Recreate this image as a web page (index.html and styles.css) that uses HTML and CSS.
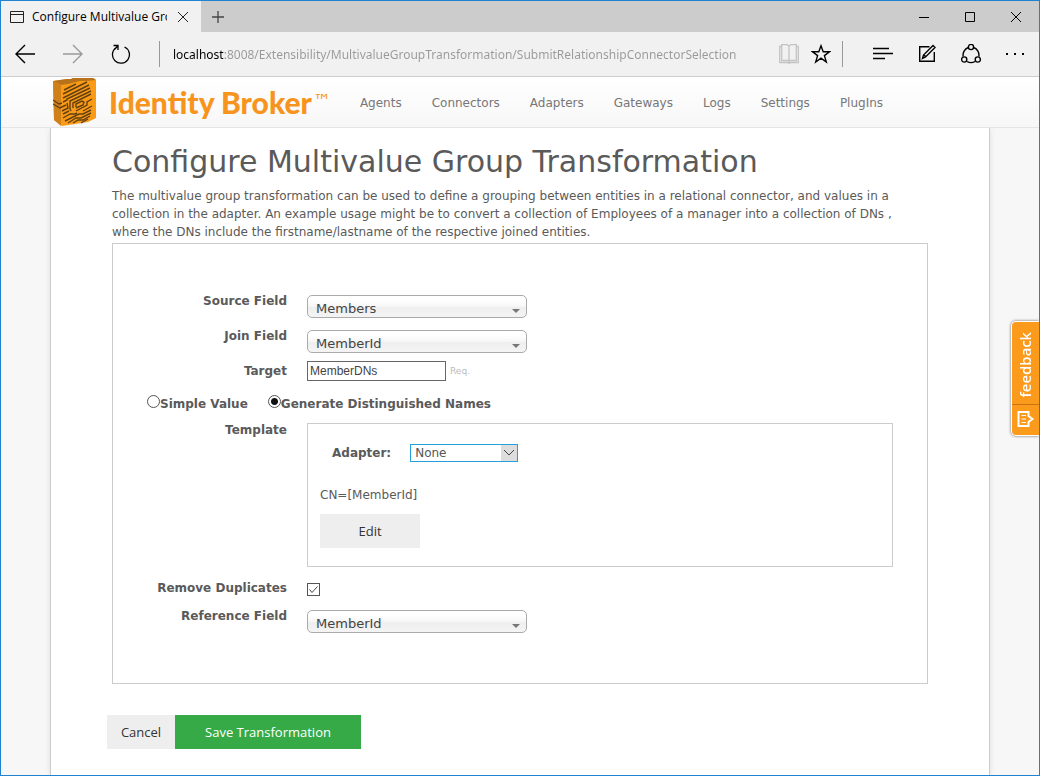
FILE: index.html
```html
<!DOCTYPE html>
<html lang="en">
<head>
  <meta charset="utf-8">
  <title>Configure Multivalue Group Transformation</title>
  <link rel="stylesheet" href="styles.css">
</head>
<body>
<div class="window">

  <!-- Browser tabs -->
  <div class="tabbar">
    <div class="tab">
      <svg class="tab-icon" width="14" height="12" viewBox="0 0 14 12"><path d="M.5.5h13v11H.5zM.5 3.500h13" fill="none" stroke="#222"/></svg>
      <span class="tab-title">Configure Multivalue Group</span>
      <button class="icon-btn" aria-label="Close tab">
        <svg width="12" height="12" viewBox="0 0 12 12"><path d="M1 1l10 10M11 1L1 11" stroke="#222" fill="none"/></svg>
      </button>
    </div>
    <button class="icon-btn new-tab" aria-label="New tab">
      <svg width="12" height="12" viewBox="0 0 12 12"><path d="M6 0v12M0 6h12" stroke="#444" stroke-width="1.300" fill="none"/></svg>
    </button>
    <div class="window-buttons">
      <button class="icon-btn" aria-label="Minimize"><svg width="12" height="12" viewBox="0 0 12 12"><path d="M1 6.500h10" stroke="#000"/></svg></button>
      <button class="icon-btn" aria-label="Maximize"><svg width="12" height="12" viewBox="0 0 12 12"><path d="M1.500 1.500h9v9h-9z" fill="none" stroke="#000"/></svg></button>
      <button class="icon-btn" aria-label="Close"><svg width="12" height="12" viewBox="0 0 12 12"><path d="M1 1l10 10M11 1L1 11" stroke="#000" fill="none"/></svg></button>
    </div>
  </div>

  <!-- Address bar -->
  <div class="toolbar">
    <div class="nav-buttons">
      <button class="icon-btn" aria-label="Back"><svg width="20" height="20" viewBox="0 0 20 20"><path d="M20 10H1M10 1L1 10l9 9" fill="none" stroke="#000" stroke-width="1.400"/></svg></button>
      <button class="icon-btn" aria-label="Forward"><svg width="20" height="20" viewBox="0 0 20 20"><path d="M0 10h19M10 1l9 9-9 9" fill="none" stroke="#999" stroke-width="1.400"/></svg></button>
      <button class="icon-btn" aria-label="Refresh"><svg width="20" height="20" viewBox="0 0 20 20"><path d="M13.500 3a8.500 8.500 0 1 1-8.500 .800M2.500 1.500H7V6M7 1.500L4 5" fill="none" stroke="#000" stroke-width="1.300"/></svg></button>
    </div>
    <div class="divider"></div>
    <input class="address" aria-label="Address" value="localhost:8008/Extensibility/MultivalueGroupTransformation/SubmitRelationshipConnectorSelection">
    <div class="page-buttons">
      <button class="icon-btn" aria-label="Reading view"><svg width="20" height="20" viewBox="0 0 20 20"><path d="M.700 2.500h2V.700H8l2 1.300L12 .700h5.300v1.800h2v16H11l-1 1-1-1H.700zM2.700 2.500v14H9l1 .800 1-.800h6.300v-14M10 2v15" fill="none" stroke="#c4c4c4" stroke-width="1.300"/></svg></button>
      <button class="icon-btn" aria-label="Favorite"><svg width="20" height="20" viewBox="0 0 20 20"><path d="M10 1.800l2.200 6h6.200l-5 3.800 1.900 6.400-5.300-3.800L4.700 18l1.900-6.400-5-3.800h6.200z" fill="none" stroke="#000" stroke-width="1.400"/></svg></button>
    </div>
    <div class="divider"></div>
    <div class="hub-buttons">
      <button class="icon-btn" aria-label="Hub"><svg width="20" height="20" viewBox="0 0 20 20"><path d="M0 4.500h16M0 9.500h20M0 14.500h12" stroke="#000" stroke-width="1.300"/></svg></button>
      <button class="icon-btn" aria-label="Web note"><svg width="20" height="20" viewBox="0 0 20 20"><path d="M12.500 2.700H2.700v14.600h14.600V8M5.500 14.500l1-3.500L16 1.500l2 2L8.500 13zM7 11l2 2" fill="none" stroke="#000" stroke-width="1.400"/></svg></button>
      <button class="icon-btn" aria-label="Share"><svg width="20" height="20" viewBox="0 0 20 20"><g fill="none" stroke="#000" stroke-width="1.400"><path d="M7.300 3.500A8 8 0 0 0 2.200 12.500M12.700 3.500a8 8 0 0 1 5.100 9M6 17.500a8 8 0 0 0 8 0"/><circle cx="10" cy="3" r="2.600"/><circle cx="3.200" cy="15.500" r="2.600"/><circle cx="16.800" cy="15.500" r="2.600"/></g></svg></button>
      <button class="icon-btn" aria-label="More"><svg width="20" height="20" viewBox="0 0 20 20"><path d="M1 9h2v2H1zM9 9h2v2H9zM17 9h2v2h-2z"/></svg></button>
    </div>
  </div>

  <!-- Site header -->
  <header class="site-header">
    <div class="header-inner">
      <a class="brand" href="#">
        <svg width="44" height="48" viewBox="0 0 44 48">
          <path d="M0 3L14 1h4l2-1h20l3 2v38l-8 4-26 4-8-6z" fill="#fb9a17"/>
          <path d="M0 3L14 1h4l2-1h20l3 2-10 1-6 0-12 3-7 1z" fill="#b8721b"/>
          <path d="M0 3l8 4v41l-7-6z" fill="#d08018"/>
          <g fill="none" stroke="#62400f" stroke-width="1.400">
            <path d="M11 12l12-6M10 16l24-12M10 20l26-13M10 24l4-2v-1l23-11"/>
            <path d="M0 22l6 4 3-1M0 26l7 4 6-3M9 33l6-3-1-5M10 36l6-3"/>
            <path d="M18 33l-1-2v-8l21-10M20 30v-5l18-9M23 29v-3l6-3 2 1-1 3-7 3M23 33l11-6v-3l5-3M30 33l9-5"/>
            <path d="M10 40l7-4h5l2-1M12 43l14-7h4l8-4M15 45l8-5h5l10-5M20 45l5-3h5l7-4M28 45l7-4"/>
          </g>
        </svg>
        <span class="brand-name">Identity Broker</span><span class="brand-tm">™</span>
      </a>
      <nav class="site-nav">
        <a href="#">Agents</a>
        <a href="#">Connectors</a>
        <a href="#">Adapters</a>
        <a href="#">Gateways</a>
        <a href="#">Logs</a>
        <a href="#">Settings</a>
        <a href="#">PlugIns</a>
      </nav>
    </div>
  </header>

  <main class="page">
    <h1>Configure Multivalue Group Transformation</h1>
    <p class="intro">The multivalue group transformation can be used to define a grouping between entities in a relational connector, and values in a collection in the adapter. An example usage might be to convert a collection of Employees of a manager into a collection of DNs , where the DNs include the firstname/lastname of the respective joined entities.</p>

    <form>
      <div class="panel">
        <div class="row">
          <label class="row-label" for="source">Source Field</label>
          <div class="picker">
            <select id="source"><option>Members</option></select>
            <svg class="arrow" width="8" height="4" viewBox="0 0 8 4"><path d="M0 0h8L4 4z" fill="#777"/></svg>
          </div>
        </div>
        <div class="row">
          <label class="row-label" for="join">Join Field</label>
          <div class="picker">
            <select id="join"><option>MemberId</option></select>
            <svg class="arrow" width="8" height="4" viewBox="0 0 8 4"><path d="M0 0h8L4 4z" fill="#777"/></svg>
          </div>
        </div>
        <div class="row row-target">
          <label class="row-label" for="target">Target</label>
          <input class="text" type="text" id="target" value="MemberDNs">
          <span class="req">Req.</span>
        </div>
        <div class="row row-radios">
          <label class="radio"><input type="radio" name="mode">Simple Value</label>
          <label class="radio"><input type="radio" name="mode" checked>Generate Distinguished Names</label>
        </div>
        <div class="row row-template">
          <span class="row-label">Template</span>
          <div class="template">
            <div class="adapter">
              <label for="adapter">Adapter:</label>
              <div class="dropdown">
                <select id="adapter"><option>None</option></select>
                <svg class="chevron" width="16" height="16" viewBox="0 0 16 16"><path d="M0 0h16v16H0z" fill="#ddd"/><path d="M3 5l5 5 5-5" fill="none" stroke="#444"/></svg>
              </div>
            </div>
            <div class="expression">CN=[MemberId]</div>
            <button class="btn btn-edit" type="button">Edit</button>
          </div>
        </div>
        <div class="row row-check">
          <label class="row-label" for="dupes">Remove Duplicates</label>
          <span class="check">
            <input type="checkbox" id="dupes" checked>
            <svg class="tick" width="13" height="13" viewBox="0 0 13 13"><path d="M2.500 6.500L5 9.500l5.500-6" fill="none" stroke="#444"/></svg>
          </span>
        </div>
        <div class="row">
          <label class="row-label" for="reference">Reference Field</label>
          <div class="picker">
            <select id="reference"><option>MemberId</option></select>
            <svg class="arrow" width="8" height="4" viewBox="0 0 8 4"><path d="M0 0h8L4 4z" fill="#777"/></svg>
          </div>
        </div>
      </div>
      <div class="actions">
        <button class="btn btn-cancel" type="button">Cancel</button>
        <button class="btn btn-save" type="submit">Save Transformation</button>
      </div>
    </form>
  </main>

  <a class="feedback" href="#">
    <svg width="18" height="18" viewBox="0 0 18 18"><path d="M2 2h10v4l4 3-4 3v4H2z" fill="none" stroke="#fff" stroke-width="2"/><path d="M5 5.500h4.500M5 9h4.500M5 12.500h4.500" stroke="#fff" stroke-width="1.200"/></svg>
    <span>feedback</span>
  </a>
</div>
</body>
</html>
```
FILE: styles.css
```css
* {
  box-sizing: border-box;
}
body {
  margin: 0;
  font-family: Verdana, "DejaVu Sans", sans-serif;
  font-size: 12px;
  color: #5a5a5a;
}
a {
  text-decoration: none;
}
svg {
  display: block;
}
button {
  border: 0;
  padding: 0;
  cursor: pointer;
}
.window {
  display: flex;
  flex-direction: column;
  min-height: 100vh;
  border: 1px solid #1f83d1;
  background: #f7f7f7;
}

/* Browser tabs */
.tabbar {
  display: flex;
  height: 31px;
  background: #ccc;
}
.tab {
  display: flex;
  align-items: center;
  width: 200px;
  padding: 0 12px 0 9px;
  background: #f1f1f1;
  color: #000;
  font-family: "Segoe UI", "Open Sans", sans-serif;
}
.tab-icon {
  flex: none;
}
.tab-title {
  flex: 1;
  margin: 0 10px 0 8px;
  overflow: hidden;
  white-space: nowrap;
}
.icon-btn {
  flex: none;
  background: none;
}
.new-tab {
  margin-left: 11px;
}
.window-buttons {
  display: flex;
  gap: 34px;
  margin-left: auto;
  padding-right: 17px;
}

/* Address bar */
.toolbar {
  display: flex;
  align-items: center;
  height: 45px;
  background: #f1f1f1;
  border-bottom: 1px solid #ccc;
}
.nav-buttons {
  display: flex;
  gap: 28px;
  padding: 0 28px 0 14px;
}
.divider {
  width: 1px;
  height: 26px;
  background: #999;
}
.address {
  flex: 1;
  min-width: 0;
  margin-left: 13px;
  border: 0;
  padding: 0;
  font-family: "Segoe UI", "Noto Sans", sans-serif;
  font-size: 12px;
  color: transparent;
  /* host is dark, the path is dimmed */
  background: linear-gradient(to right, #000 51px, #999 51px);
  -webkit-background-clip: text;
  background-clip: text;
}
.page-buttons {
  display: flex;
  gap: 12px;
  padding: 0 11px 0 12px;
}
.hub-buttons {
  display: flex;
  gap: 24px;
  padding: 0 14px 0 30px;
}

/* Site header */
.site-header {
  height: 51px;
  background: linear-gradient(#fff, #f7f7f7);
  border-bottom: 1px solid #e5e5e5;
}
.header-inner {
  display: flex;
  align-items: center;
  max-width: 940px;
  height: 50px;
  margin: 0 auto;
  padding-left: 3px;
}
.brand {
  display: flex;
  align-items: center;
  color: #f7941d;
}
.brand-name {
  margin-left: 12px;
  font-family: Lato, sans-serif;
  font-size: 30px;
  font-weight: 900;
}
.brand-tm {
  align-self: flex-start;
  margin-left: 1px;
  font-size: 18px;
  line-height: 46px;
}
.site-nav {
  display: flex;
  gap: 30px;
  margin-left: 29px;
  padding-top: 2px;
  line-height: 18px;
}
.site-nav a {
  color: #777;
}

/* Page body */
.page {
  flex: 1;
  width: 100%;
  max-width: 940px;
  margin: 0 auto;
  padding: 14px 61px 26px;
  background: #fff;
  border: solid #ccc;
  border-width: 0 1px;
  box-shadow: 0 0 6px rgba(0, 0, 0, 0.1);
  clip-path: inset(0 -8px);
}
h1 {
  margin: 0;
  font-size: 30px;
  font-weight: normal;
  line-height: 40px;
}
.intro {
  margin: 5px 0 2px;
  line-height: 18px;
}
.panel {
  padding: 47px 34px 50px 0;
  border: 1px solid #ccc;
}
.row {
  display: flex;
  align-items: flex-start;
  margin-bottom: 8px;
}
.row:last-child {
  margin-bottom: 0;
}
.row-label {
  flex: none;
  width: 174px;
  margin-right: 20px;
  font-weight: bold;
  line-height: 20px;
  text-align: right;
}

/* Rounded drop-downs */
.picker {
  position: relative;
  width: 220px;
  margin-top: 4px;
}
.picker select {
  display: block;
  appearance: none;
  width: 100%;
  height: 23px;
  padding: 4px 20px 0 8px;
  border: 1px solid #aaa;
  border-radius: 5px;
  background: linear-gradient(#fff 20%, #f6f6f6 50%, #eee 52%, #f4f4f4 100%);
  color: #444;
  font-family: inherit;
  font-size: 13px;
}
.arrow {
  position: absolute;
  right: 7px;
  bottom: 5px;
  pointer-events: none;
}
.text {
  width: 139px;
  height: 20px;
  border: 1px solid #666;
  padding: 0 2px;
  color: #444;
  font-family: Arial, "Liberation Sans", sans-serif;
  font-size: 12px;
}
.req {
  margin-left: 4px;
  color: #bbb;
  font-size: 9px;
  line-height: 21px;
}
.row-target {
  margin-bottom: 12px;
}
.row-radios {
  gap: 20px;
  margin-bottom: 6px;
  padding-left: 34px;
}
.radio {
  display: flex;
  font-weight: bold;
  line-height: 20px;
}
.radio input {
  appearance: none;
  width: 13px;
  height: 13px;
  margin: 1px 0 0;
  border: 1px solid #555;
  border-radius: 50%;
  background: #fff;
}
.radio input:checked {
  background: radial-gradient(#111 3px, #fff 4px);
}

/* Template box */
.row-template {
  margin-bottom: 11px;
}
.template {
  flex: 1;
  margin-top: 3px;
  padding: 20px 12px 18px;
  border: 1px solid #ccc;
}
.adapter {
  display: flex;
  gap: 19px;
  padding-left: 12px;
  line-height: 18px;
}
.adapter label {
  font-weight: bold;
}
.dropdown {
  position: relative;
  width: 108px;
}
.dropdown select {
  display: block;
  appearance: none;
  width: 100%;
  height: 18px;
  padding: 0 18px 0 4px;
  border: 1px solid #26a0da;
  border-radius: 0;
  background: #fff;
  color: #555;
  font-family: inherit;
  font-size: 12px;
}
.chevron {
  position: absolute;
  top: 1px;
  right: 1px;
  pointer-events: none;
}
.expression {
  margin: 24px 0 10px;
  line-height: 18px;
}
.row-check {
  margin-bottom: 8px;
}
.check {
  position: relative;
  margin-top: 5px;
}
.check input {
  display: block;
  appearance: none;
  width: 13px;
  height: 13px;
  margin: 0;
  border: 1px solid #555;
  background: #fff;
}
.tick {
  position: absolute;
  top: 0;
  left: 0;
  pointer-events: none;
}

/* Buttons */
.btn {
  height: 34px;
  background: #eee;
  color: #333;
  font-family: "Segoe UI", "Open Sans", sans-serif;
  font-size: 13px;
}
.btn-edit {
  width: 100px;
}
.actions {
  display: flex;
  margin: 31px 0 0 -5px;
}
.btn-cancel {
  width: 68px;
}
.btn-save {
  width: 186px;
  background: #37aa48;
  color: #fff;
}

/* Feedback tab sits over the page edge */
.feedback {
  position: fixed;
  top: 321px;
  right: 1px;
  display: flex;
  flex-direction: column-reverse;
  align-items: center;
  width: 28px;
  border: 1px solid #fff;
  border-right: 0;
  border-radius: 5px 0 0 5px;
  background: #fb9a1b;
  box-shadow: 0 0 3px rgba(0, 0, 0, 0.6);
  clip-path: inset(-4px 0 -4px -4px);
  color: #fff;
  font-family: "Noto Sans", sans-serif;
  font-size: 15px;
  font-weight: 500;
}
.feedback span {
  padding: 6px 0 10px;
  line-height: 25px;
  writing-mode: vertical-rl;
  transform: rotate(180deg);
}
.feedback svg {
  align-self: stretch;
  width: 100%;
  height: 31px;
  padding: 5px 0 7px;
  border-top: 1px solid #c87510;
}
```
